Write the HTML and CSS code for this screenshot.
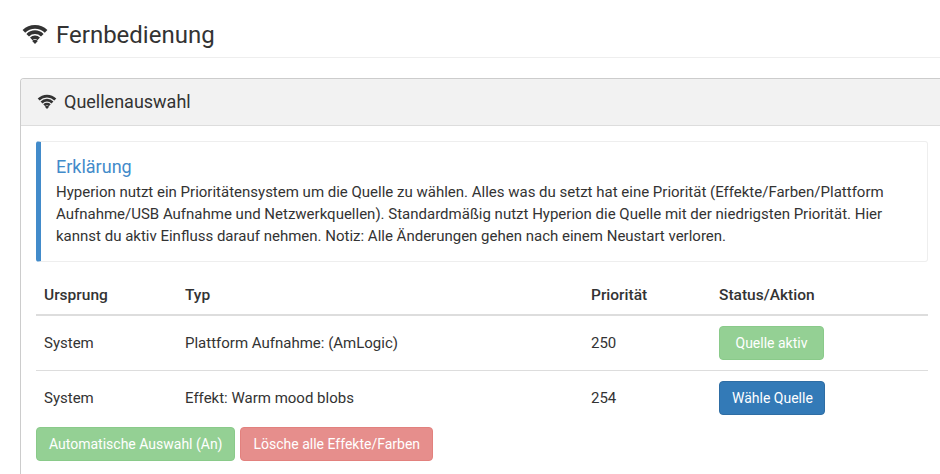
FILE: index.html
```html
<!DOCTYPE html>
<html lang="de">
<head>
<meta charset="utf-8">
<title>Fernbedienung</title>
<link rel="stylesheet" href="styles.css">
</head>
<body>
<main class="page">
  <h1 class="page-title">
    <svg class="wifi wifi-lg" viewBox="0 0 26 20"><path class="arc" d="M1.9 7.4A15.8 15.8 0 0 1 24.1 7.4M5.7 11.2A10.4 10.4 0 0 1 20.3 11.2M9.3 14.9A5.4 5.4 0 0 1 16.7 14.9"/><path class="dot" d="M13 20 10.2 17.1A3.8 3.8 0 0 1 15.8 17.1Z"/></svg>
    Fernbedienung
  </h1>
  <section class="panel">
    <h2 class="panel-heading">
      <svg class="wifi wifi-sm" viewBox="0 0 26 20"><path class="arc" d="M1.9 7.4A15.8 15.8 0 0 1 24.1 7.4M5.7 11.2A10.4 10.4 0 0 1 20.3 11.2M9.3 14.9A5.4 5.4 0 0 1 16.7 14.9"/><path class="dot" d="M13 20 10.2 17.1A3.8 3.8 0 0 1 15.8 17.1Z"/></svg>
      Quellenauswahl
    </h2>
    <div class="panel-body">
      <div class="callout">
        <h4 class="callout-title">Erklärung</h4>
        <p class="callout-text">Hyperion nutzt ein Prioritätensystem um die Quelle zu wählen. Alles was du setzt hat eine Priorität (Effekte/Farben/Plattform Aufnahme/USB Aufnahme und Netzwerkquellen). Standardmäßig nutzt Hyperion die Quelle mit der niedrigsten Priorität. Hier kannst du aktiv Einfluss darauf nehmen. Notiz: Alle Änderungen gehen nach einem Neustart verloren.</p>
      </div>
      <table class="sources">
        <thead>
          <tr><th class="col-origin">Ursprung</th><th class="col-type">Typ</th><th class="col-prio">Priorität</th><th>Status/Aktion</th></tr>
        </thead>
        <tbody>
          <tr><td>System</td><td>Plattform Aufnahme: (AmLogic)</td><td>250</td><td><button class="btn btn-success btn-off btn-wide">Quelle aktiv</button></td></tr>
          <tr><td>System</td><td>Effekt: Warm mood blobs</td><td>254</td><td><button class="btn btn-primary">Wähle Quelle</button></td></tr>
        </tbody>
      </table>
      <div class="actions">
        <button class="btn btn-success btn-off">Automatische Auswahl (An)</button>
        <button class="btn btn-danger btn-off">Lösche alle Effekte/Farben</button>
      </div>
    </div>
  </section>
</main>
</body>
</html>
```
FILE: styles.css
```css
* { box-sizing: border-box; }
html, body { margin: 0; height: 100%; overflow: hidden; background: #fff; }
body { font-family: Roboto, "Liberation Sans", sans-serif; font-size: 15px; line-height: 20px; color: #333; }
.page { padding: 20px 0 0 20px; width: 944px; }
.page-title { display: flex; align-items: center; gap: 8px; margin: 0 0 20px; height: 38px; padding: 1px 0 8px 2px; border-bottom: 1px solid #eee; font-size: 24px; font-weight: 400; line-height: 28px; }
.wifi { display: block; flex: none; }
.wifi .arc { fill: none; stroke: #333; }
.wifi .dot { fill: #333; }
.wifi-lg { width: 26px; height: 20px; margin-top: -2px; }
.wifi-lg .arc { stroke-width: 3.7; }
.wifi-sm { width: 20px; height: 15px; margin-top: -1px; }
.wifi-sm .arc { stroke-width: 3.7; }
.panel { border: 1px solid #ccc; border-radius: 4px 4px 0 0; border-bottom: 0; background: #fff; }
.panel-heading { display: flex; align-items: center; gap: 7px; margin: 0; height: 47px; padding: 0 16px; background: #f2f2f2; border-bottom: 1px solid #ddd; font-size: 18px; font-weight: 400; color: #333; border-radius: 3px 3px 0 0; }
.panel-body { padding: 15px; }
.callout { padding: 15px 15px 7px; border: 1px solid #eee; border-left: 5px solid #428bca; border-radius: 3px; margin-bottom: 12px; height: 121px; }
.callout-title { margin: 0 0 4px; font-size: 18px; font-weight: 400; line-height: 20px; color: #428bca; }
.callout-text { margin: 0; line-height: 22px; }
.sources { width: 100%; border-collapse: collapse; }
.sources th { padding: 11px 8px 9px; text-align: left; font-size: 15.5px; font-weight: 500; border-bottom: 2px solid #ddd; }
.sources td { padding: 10px 8px; height: 55px; vertical-align: middle; border-top: 1px solid #ddd; }
.sources tbody tr:first-child td { border-top: 0; }
.col-origin { width: 141px; }
.col-type { width: 406px; }
.col-prio { width: 128px; }
.actions { display: flex; gap: 5px; margin-top: 1px; }
.btn { display: inline-block; height: 34px; padding: 6px 11.5px 6px 12px; font: inherit; font-size: 14px; color: #fff; border: 1px solid transparent; border-radius: 4px; }
.btn-danger { padding: 6px 12px 6px 12.5px; }
.btn-wide { padding: 6px 15.5px; }
.btn-off { opacity: .65; }
.btn-success { background: #5cb85c; border-color: #4cae4c; }
.btn-primary { background: #337ab7; border-color: #2e6da4; }
.btn-danger { background: #d9534f; border-color: #d43f3a; }
```
